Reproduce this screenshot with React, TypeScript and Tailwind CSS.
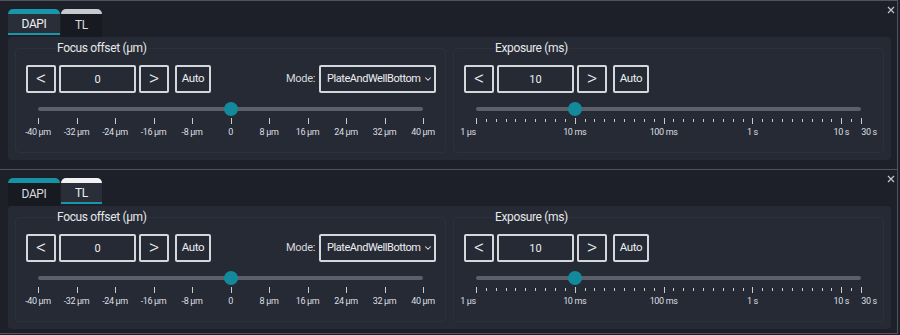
import { ChevronDown } from "lucide-react";

type Tab = { name: string; stripe: string };
type Tick = { pos: number; label?: string; major: boolean; shift?: number };

const focusTicks: Tick[] = [-40, -32, -24, -16, -8, 0, 8, 16, 24, 32, 40].map((v, i) => ({
  pos: i / 10,
  label: v === 0 ? "0" : `${v} µm`,
  major: true,
}));

// exposure scale: 1ms steps to 10ms, then 10ms, 100ms, 1s steps, then 10s steps to 30s
const expLabels: Record<number, string> = { 0: "1 µs", 10: "10 ms", 19: "100 ms", 28: "1 s", 37: "10 s", 39: "30 s" };
const exposureTicks: Tick[] = Array.from({ length: 40 }, (_, i) => ({
  pos: i / 39,
  label: expLabels[i],
  major: i in expLabels,
  shift: i === 0 ? -8 : i === 39 ? 8 : 0,
}));

function Btn({ children, w = "w-[30px]" }: { children: React.ReactNode; w?: string }) {
  return (
    <button className={`${w} h-[28px] rounded-[2px] border-2 border-[#d4d7dc] flex items-center justify-center text-[#eceef1]`}>
      {children}
    </button>
  );
}

function Stepper({ value }: { value: string }) {
  return (
    <div className="flex items-center">
      <Btn>
        <span className="text-[20px] font-light leading-none -mt-[3px]">&lt;</span>
      </Btn>
      <input
        readOnly
        value={value}
        className="ml-[3px] w-[77px] h-[28px] rounded-[2px] border-2 border-[#d4d7dc] bg-transparent text-center text-[11px] text-[#eceef1] outline-none"
      />
      <div className="ml-[3px]">
        <Btn>
          <span className="text-[20px] font-light leading-none -mt-[3px]">&gt;</span>
        </Btn>
      </div>
      <div className="ml-[6px]">
        <Btn w="w-[36px]">
          <span className="text-[11.5px] tracking-[-0.03em]">Auto</span>
        </Btn>
      </div>
    </div>
  );
}

function Slider({ value, ticks }: { value: number; ticks: Tick[] }) {
  return (
    <div className="mx-[22px] mt-[9px]">
      <div className="relative h-[14px] flex items-center">
        <div className="h-[4px] w-full rounded-full bg-[#5b6069]" />
        <div
          className="absolute top-0 h-[14px] w-[14px] -ml-[7px] rounded-full bg-[#13899c]"
          style={{ left: `${value * 100}%` }}
        />
      </div>
      <div className="relative mt-[2px] h-[20px]">
        {ticks.map((t, i) => (
          <div key={i} className="absolute top-0" style={{ left: `${t.pos * 100}%` }}>
            <div className={`w-px bg-[#c9ccd1] ${t.major ? "h-[6px]" : "h-[3px] mt-[1px]"}`} />
            {t.label && (
              <div
                className="absolute top-[9px] -translate-x-1/2 whitespace-nowrap text-[9px] leading-[10px] tracking-[-0.04em] text-[#dcdfe3]"
                style={{ left: t.shift ?? 0 }}
              >
                {t.label}
              </div>
            )}
          </div>
        ))}
      </div>
    </div>
  );
}

function Group({ title, children }: { title: string; children: React.ReactNode }) {
  return (
    <fieldset className="rounded-[4px] border border-[#2d313c] h-[113px]">
      <legend className="ml-[40px] px-[1px] text-[12px] leading-4 tracking-[-0.03em] text-[#e6e8eb]">{title}</legend>
      {children}
    </fieldset>
  );
}

function Panel({ tabs, active, last }: { tabs: Tab[]; active: number; last?: boolean }) {
  return (
    <div className={`relative w-[898px] border-t border-r border-[#50545d] pt-2 pl-2 pr-[6px] ${last ? "pb-1 border-b" : "pb-[9px]"}`}>
      <svg className="absolute top-[5px] right-[2px]" width="8" height="8" viewBox="0 0 8 8">
        <path d="M1 1L7 7M7 1L1 7" stroke="#c3c7cd" strokeWidth="1.2" />
      </svg>
      <div className="flex gap-px h-[28px]">
        {tabs.map((t, i) => {
          const on = i === active;
          return (
            <div key={t.name} className={`flex flex-col ${i === 0 ? "w-[52px]" : "w-[41px]"}`}>
              <div className="h-[5px] rounded-t-[5px]" style={{ background: t.stripe }} />
              <div
                className={`flex-1 flex items-center justify-center text-[12px] tracking-[-0.03em] ${
                  on ? "bg-[#2a2e39] text-[#eef0f2]" : "bg-[#171a21] text-[#d8dbdf]"
                }`}
              >
                {t.name}
              </div>
              {on ? <div className="h-[2px] bg-[#1897ab] mb-[2px]" /> : <div className="h-[2px] bg-[#171a21]" />}
            </div>
          );
        })}
      </div>
      <div className="h-[123px] rounded-[4px] bg-[#262a34] px-[7px] pt-[3px] grid grid-cols-2 gap-[7px]">
        <Group title="Focus offset (µm)">
          <div className="mt-[9px] pl-[10px] pr-[9px] flex items-center justify-between">
            <Stepper value="0" />
            <div className="flex items-center gap-[4px]">
              <span className="text-[11px] tracking-[-0.03em] text-[#d6d9dd]">Mode:</span>
              <div className="w-[117px] h-[28px] rounded-[2px] border-2 border-[#d4d7dc] flex items-center gap-[3px] pl-[6px] pr-[3px] text-[#eceef1] overflow-hidden">
                <span className="whitespace-nowrap text-[11px] tracking-[-0.04em]">PlateAndWellBottom</span>
                <ChevronDown className="shrink-0" size={10} strokeWidth={2.5} />
              </div>
            </div>
          </div>
          <Slider value={0.5} ticks={focusTicks} />
        </Group>
        <Group title="Exposure (ms)">
          <div className="mt-[9px] pl-[10px] flex items-center">
            <Stepper value="10" />
          </div>
          <Slider value={10 / 39} ticks={exposureTicks} />
        </Group>
      </div>
    </div>
  );
}

export default function App() {
  return (
    <div className="w-[900px] h-[335px] overflow-hidden bg-[#1d2028] font-['Roboto',sans-serif]">
      <Panel
        tabs={[
          { name: "DAPI", stripe: "#1897ab" },
          { name: "TL", stripe: "#c6cad0" },
        ]}
        active={0}
      />
      <Panel
        tabs={[
          { name: "DAPI", stripe: "#1691a5" },
          { name: "TL", stripe: "#f1f2f4" },
        ]}
        active={1}
        last
      />
    </div>
  );
}
